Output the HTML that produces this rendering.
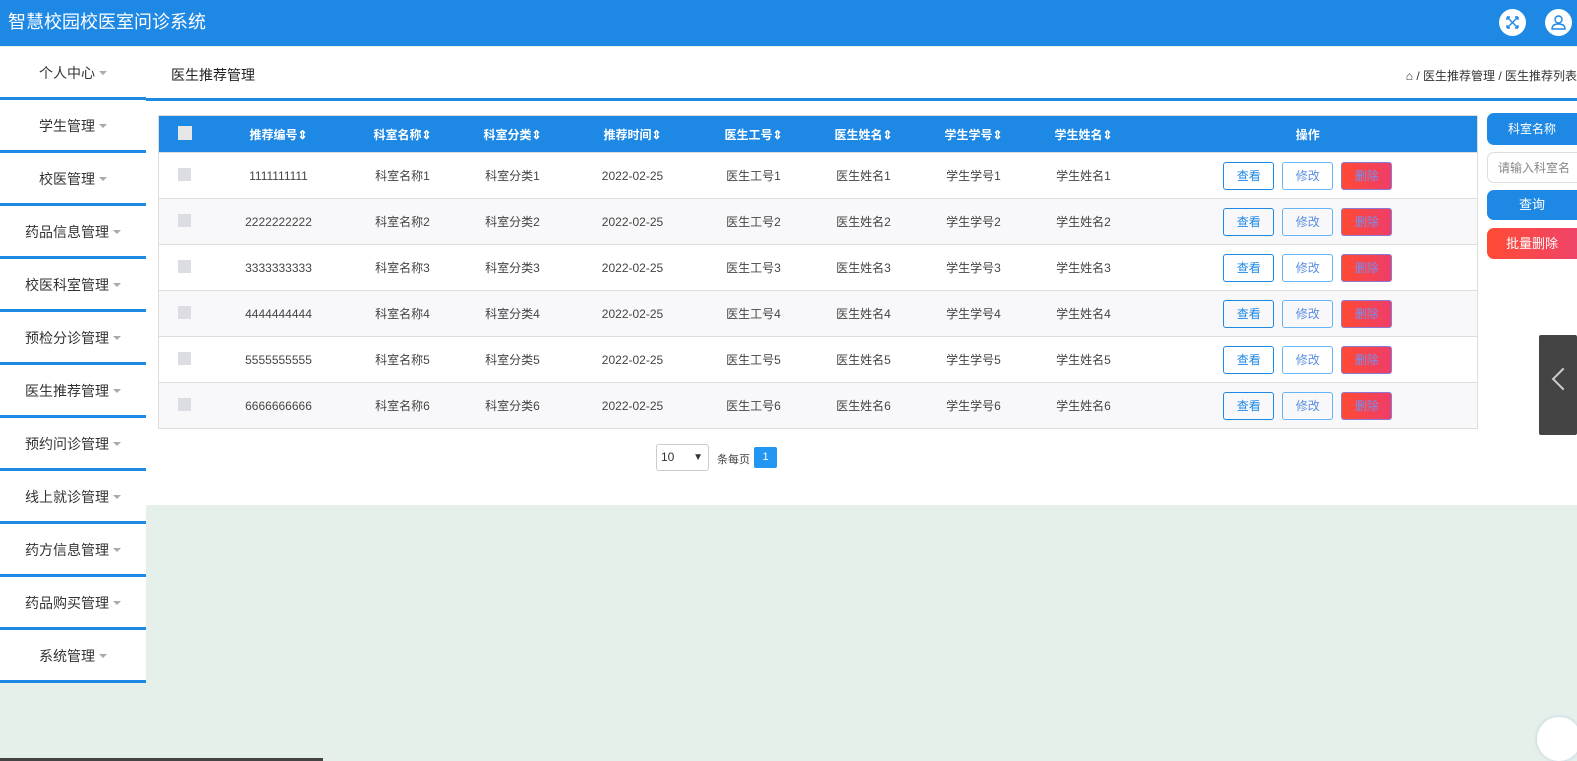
<!DOCTYPE html>
<html><head><meta charset="utf-8"><style>
*{box-sizing:border-box;margin:0;padding:0}
body{width:1577px;height:761px;overflow:hidden;background:#e6f0eb;font-family:"Liberation Sans","Noto Sans CJK SC",sans-serif;color:#333;position:relative}
.hd{position:absolute;left:0;top:0;width:1577px;height:46px;background:#1e88e5;color:#fff;font-size:18px;line-height:44px;padding-left:8px}
.ic{position:absolute;top:9px;width:27px;height:27px;border-radius:50%;background:#fff}
.sb{position:absolute;left:0;top:47px;width:146px}
.sb div{height:53px;border-bottom:3px solid #1e88e5;background:#fff;font-size:14px;line-height:52px;text-align:center;color:#333}
.sb div:after{content:"";display:inline-block;border:4px solid transparent;border-top:4px solid #aaa;margin-left:4px;vertical-align:middle;margin-top:2px}
.main{position:absolute;left:146px;top:47px;width:1431px;height:458px;background:#fff}
.bc{position:absolute;left:0;top:0;width:1431px;height:54px;border-bottom:3px solid #1e88e5}
table{position:absolute;left:12px;top:68px;width:1320px;border-collapse:collapse;font-size:12px;border:1px solid #ddd}
th{background:#1e88e5;color:#fff;height:37px;font-weight:bold;font-size:12px}
td{height:46px;text-align:center;border-top:1px solid #ddd;color:#444}
tr:nth-child(odd) td{background:#f8f8fa}
.cb{display:inline-block;width:13px;height:13px;background:#dcdde2}
th .cb{width:14px;height:14px;background:#e6e6e6}
.b{display:inline-block;width:51px;height:28px;line-height:26px;border:1px solid #1e88e5;border-radius:3px;color:#1e88e5;margin:0 4px;font-size:12px;vertical-align:middle}
.b.m{border-color:#64b5f6;color:#5b8fe0}
.b.d{background:linear-gradient(90deg,#ff4a33,#ee3d6a);border-color:#8a7bd0;color:#7b8df0}
.rb{position:absolute;left:1487px;width:90px;border-radius:7px 0 0 7px;font-size:12px;text-align:center;color:#fff}
</style></head><body>
<div class="hd">智慧校园校医室问诊系统</div>
<div class="ic" style="left:1499px"><svg width="27" height="27" viewBox="0 0 27 27" fill="none" stroke="#1e88e5" stroke-width="1.4"><path d="M8 8l11 11M19 8L8 19M8 8h3M8 8v3M19 8h-3M19 8v3M8 19h3M8 19v-3M19 19h-3M19 19v-3"/></svg></div>
<div class="ic" style="left:1545px"><svg width="27" height="27" viewBox="0 0 27 27" fill="none" stroke="#1e88e5" stroke-width="1.4"><circle cx="13.5" cy="10.5" r="3.5"/><path d="M7 20c0-4 3-5 6.5-5s6.5 1 6.5 5z"/></svg></div>
<div class="sb"><div>个人中心</div><div>学生管理</div><div>校医管理</div><div>药品信息管理</div><div>校医科室管理</div><div>预检分诊管理</div><div>医生推荐管理</div><div>预约问诊管理</div><div>线上就诊管理</div><div>药方信息管理</div><div>药品购买管理</div><div>系统管理</div></div>
<div class="main">
<div class="bc"><span style="position:absolute;left:25px;top:18px;font-size:14px;color:#222">医生推荐管理</span><span style="position:absolute;right:0;top:20px;font-size:12px;color:#333">⌂ / 医生推荐管理 / 医生推荐列表</span></div>
<table>
<tr><th style="width:52px"><span class="cb"></span></th><th style="width:136px">推荐编号⇕</th><th style="width:112px">科室名称⇕</th><th style="width:108px">科室分类⇕</th><th style="width:132px">推荐时间⇕</th><th style="width:110px">医生工号⇕</th><th style="width:110px">医生姓名⇕</th><th style="width:110px">学生学号⇕</th><th style="width:110px">学生姓名⇕</th><th>操作</th></tr>
<tr><td><span class="cb"></span></td><td>1111111111</td><td>科室名称1</td><td>科室分类1</td><td>2022-02-25</td><td>医生工号1</td><td>医生姓名1</td><td>学生学号1</td><td>学生姓名1</td><td><span class="b">查看</span><span class="b m">修改</span><span class="b d">删除</span></td></tr>
<tr><td><span class="cb"></span></td><td>2222222222</td><td>科室名称2</td><td>科室分类2</td><td>2022-02-25</td><td>医生工号2</td><td>医生姓名2</td><td>学生学号2</td><td>学生姓名2</td><td><span class="b">查看</span><span class="b m">修改</span><span class="b d">删除</span></td></tr>
<tr><td><span class="cb"></span></td><td>3333333333</td><td>科室名称3</td><td>科室分类3</td><td>2022-02-25</td><td>医生工号3</td><td>医生姓名3</td><td>学生学号3</td><td>学生姓名3</td><td><span class="b">查看</span><span class="b m">修改</span><span class="b d">删除</span></td></tr>
<tr><td><span class="cb"></span></td><td>4444444444</td><td>科室名称4</td><td>科室分类4</td><td>2022-02-25</td><td>医生工号4</td><td>医生姓名4</td><td>学生学号4</td><td>学生姓名4</td><td><span class="b">查看</span><span class="b m">修改</span><span class="b d">删除</span></td></tr>
<tr><td><span class="cb"></span></td><td>5555555555</td><td>科室名称5</td><td>科室分类5</td><td>2022-02-25</td><td>医生工号5</td><td>医生姓名5</td><td>学生学号5</td><td>学生姓名5</td><td><span class="b">查看</span><span class="b m">修改</span><span class="b d">删除</span></td></tr>
<tr><td><span class="cb"></span></td><td>6666666666</td><td>科室名称6</td><td>科室分类6</td><td>2022-02-25</td><td>医生工号6</td><td>医生姓名6</td><td>学生学号6</td><td>学生姓名6</td><td><span class="b">查看</span><span class="b m">修改</span><span class="b d">删除</span></td></tr>
</table>
<div style="position:absolute;left:510px;top:397px;width:53px;height:27px;border:1px solid #ccc;border-radius:3px;font-size:12px;line-height:25px;padding-left:4px">10<span style="position:absolute;right:5px;font-size:10px">▼</span></div>
<span style="position:absolute;left:571px;top:404px;font-size:11px;color:#444">条每页</span>
<span style="position:absolute;left:608px;top:400px;width:23px;height:21px;background:#2196f3;color:#fff;font-size:11px;text-align:center;line-height:21px;border-radius:2px">1</span>
</div>
<div class="rb" style="top:113px;height:32px;line-height:32px;background:#1e88e5">科室名称</div>
<div class="rb" style="top:152px;height:31px;line-height:31px;background:#fff;border:1px solid #ddd;border-right:none;color:#888;text-align:left;padding-left:10px">请输入科室名</div>
<div class="rb" style="top:190px;height:30px;line-height:30px;background:#1e88e5;font-size:13px">查询</div>
<div class="rb" style="top:228px;height:31px;line-height:31px;background:linear-gradient(90deg,#ff4a33,#f0446a);font-size:13px">批量删除</div>
<div style="position:absolute;left:1539px;top:335px;width:38px;height:100px;background:#444;border-radius:2px"><span style="position:absolute;left:16px;top:36px;width:16px;height:16px;border-left:2px solid #ccc;border-bottom:2px solid #ccc;transform:rotate(45deg)"></span></div>
<div style="position:absolute;left:1537px;top:717px;width:44px;height:44px;border-radius:50%;background:#fff;box-shadow:0 0 4px #bcd"></div>
<div style="position:absolute;left:0;top:758px;width:323px;height:3px;background:#444"></div>
</body></html>
